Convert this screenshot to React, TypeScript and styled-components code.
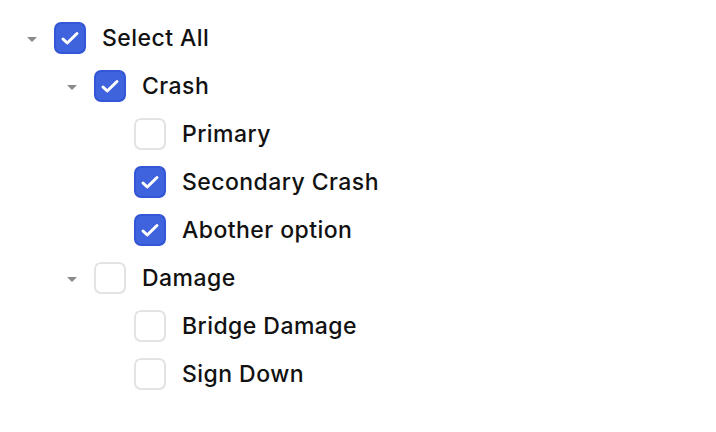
import React from "react";
import styled, { createGlobalStyle } from "styled-components";

const Global = createGlobalStyle`
  html, body { margin: 0; padding: 0; background: #ffffff; }
  body { font-family: Inter, "Noto Sans", sans-serif; }
`;

type Node = { label: string; checked: boolean; children?: Node[] };

const tree: Node[] = [
  {
    label: "Select All",
    checked: true,
    children: [
      {
        label: "Crash",
        checked: true,
        children: [
          { label: "Primary", checked: false },
          { label: "Secondary Crash", checked: true },
          { label: "Abother option", checked: true },
        ],
      },
      {
        label: "Damage",
        checked: false,
        children: [
          { label: "Bridge Damage", checked: false },
          { label: "Sign Down", checked: false },
        ],
      },
    ],
  },
];

const Wrapper = styled.div`
  padding: 22px 0 0 22px;
  display: flex;
  flex-direction: column;
  gap: 16px;
`;

const Row = styled.div<{ $level: number }>`
  display: flex;
  align-items: center;
  height: 32px;
  padding-left: ${(p) => p.$level * 40}px;
`;

const CaretSlot = styled.div`
  width: 20px;
  height: 32px;
  margin-right: 12px;
  display: flex;
  align-items: center;
  justify-content: center;
`;

const Caret = styled.div`
  width: 0;
  height: 0;
  border-left: 5px solid transparent;
  border-right: 5px solid transparent;
  border-top: 5px solid #8a8a8a;
  margin-top: 2px;
  border-radius: 1px;
`;

const Box = styled.div<{ $checked: boolean }>`
  box-sizing: border-box;
  width: 32px;
  height: 32px;
  border-radius: 7px;
  border: 2px solid ${(p) => (p.$checked ? "#3457d5" : "#e3e3e3")};
  background: ${(p) => (p.$checked ? "#3e63dd" : "#ffffff")};
  display: flex;
  align-items: center;
  justify-content: center;
  flex-shrink: 0;
`;

const Label = styled.span`
  margin-left: 16px;
  font-size: 23px;
  font-weight: 500;
  color: #111111;
  letter-spacing: 0.45px;
  line-height: 32px;
  margin-top: -1px;
`;

const Check = () => (
  <svg width="32" height="32" viewBox="0 0 32 32" style={{ margin: -2 }}>
    <path
      d="M9 17 L13.2 21 L23 11.5"
      fill="none"
      stroke="#ffffff"
      strokeWidth="3"
      strokeLinecap="round"
      strokeLinejoin="round"
    />
  </svg>
);

function renderNodes(nodes: Node[], level: number): React.ReactNode[] {
  const out: React.ReactNode[] = [];
  nodes.forEach((n, i) => {
    out.push(
      <Row key={`${level}-${n.label}-${i}`} $level={level}>
        <CaretSlot>{n.children ? <Caret /> : null}</CaretSlot>
        <Box $checked={n.checked}>{n.checked ? <Check /> : null}</Box>
        <Label>{n.label}</Label>
      </Row>
    );
    if (n.children) out.push(...renderNodes(n.children, level + 1));
  });
  return out;
}

export default function App() {
  return (
    <>
      <Global />
      <Wrapper>{renderNodes(tree, 0)}</Wrapper>
    </>
  );
}
